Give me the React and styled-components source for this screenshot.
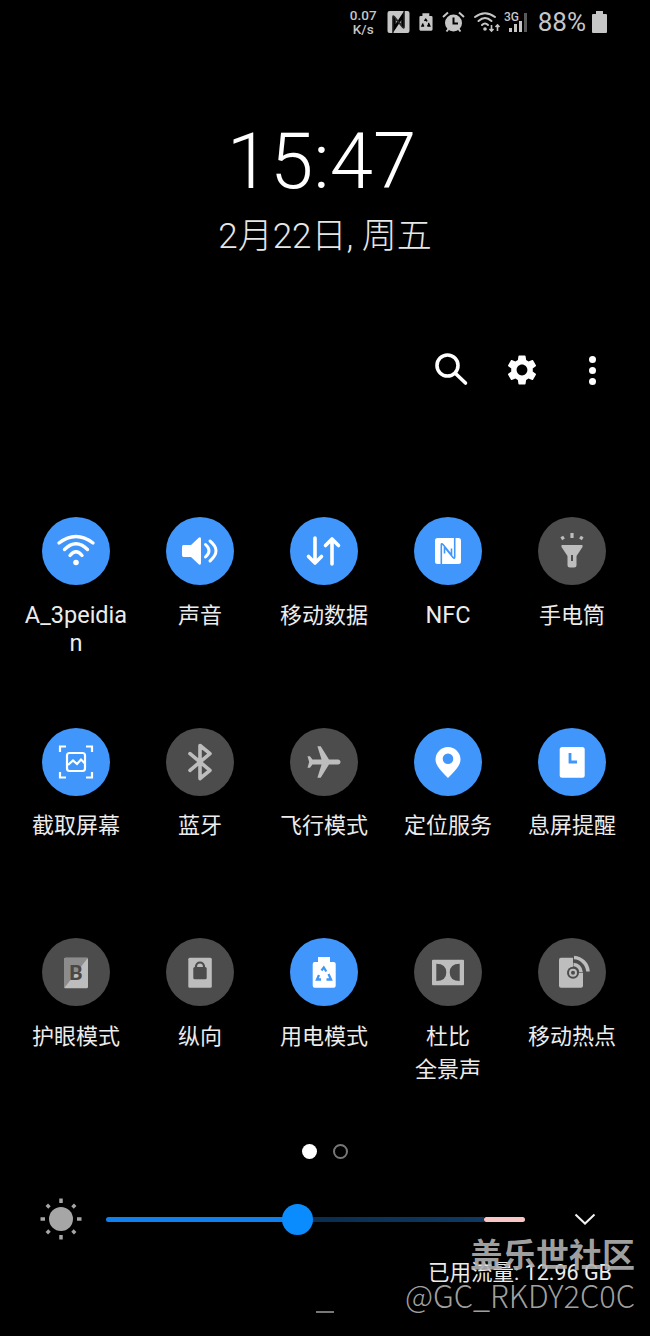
import styled, { createGlobalStyle } from 'styled-components';
import { MdSettings } from 'react-icons/md';

const ON = '#4096fa';
const OFF = '#4c4c4c';
const GLYPH = '#bdbdbd';
const STATUS = '#c6c6c6';

const GlobalStyle = createGlobalStyle`
  html, body {
    margin: 0;
    background: #000;
  }
  body {
    font-family: Roboto, "Noto Sans CJK SC", sans-serif;
    color: #ececec;
  }
`;

const Screen = styled.div`
  position: relative;
  width: 650px;
  height: 1336px;
  overflow: hidden;
  background: #000;
`;

const StatusBar = styled.div`
  display: flex;
  justify-content: flex-end;
  align-items: center;
  gap: 9px;
  height: 44px;
  padding-right: 43px;
  color: ${STATUS};
`;

const Speed = styled.div`
  width: 29px;
  font-size: 13.5px;
  font-weight: 500;
  line-height: 14px;
  text-align: center;
`;

const StatusGroup = styled.div`
  display: flex;
  align-items: center;
  gap: ${(p) => p.$gap}px;
`;

const Percent = styled.span`
  font-size: 26px;
  line-height: 30px;
`;

const Clock = styled.div`
  margin-top: 80px;
  padding-right: 7px;
  font-size: 78px;
  font-weight: 300;
  line-height: 76px;
  text-align: center;
  color: #fff;
`;

const DateLine = styled.div`
  margin-top: 16px;
  font-size: 35px;
  font-weight: 300;
  line-height: 42px;
  text-align: center;
  color: #e6e6e6;
`;

const Actions = styled.div`
  display: flex;
  align-items: center;
  height: 36px;
  margin-top: 94px;
  padding-left: 434px;
  color: #fff;
`;

const GearWrap = styled.div`
  display: flex;
  margin-left: 34px;
  margin-right: 49px;
`;

const Kebab = styled.div`
  display: flex;
  flex-direction: column;
  gap: 4px;
  & > i {
    display: block;
    width: 7px;
    height: 7px;
    border-radius: 50%;
    background: #fff;
  }
`;

const TileGrid = styled.div`
  display: grid;
  grid-template-columns: repeat(5, 124px);
  grid-template-rows: repeat(3, 145px);
  row-gap: 65.5px;
  margin-top: 129px;
  padding-left: 14px;
`;

const Tile = styled.div`
  display: flex;
  flex-direction: column;
  align-items: center;
`;

const Round = styled.div`
  width: 68px;
  height: 68px;
  border-radius: 50%;
  background: ${(p) => (p.$on ? ON : OFF)};
  & > svg {
    display: block;
  }
`;

const Label = styled.div`
  width: 112px;
  margin-top: ${(p) => (p.$latin ? 16 : 13.5)}px;
  font-size: ${(p) => (p.$latin ? 23.5 : 22)}px;
  line-height: ${(p) => (p.$latin ? 28 : 33)}px;
  text-align: center;
  white-space: pre-line;
`;

const Pager = styled.div`
  display: flex;
  justify-content: center;
  align-items: center;
  gap: 16px;
  margin-top: 61px;
`;

const PagerDot = styled.span`
  box-sizing: border-box;
  width: 15px;
  height: 15px;
  border-radius: 50%;
  background: ${(p) => (p.$active ? '#fff' : 'transparent')};
  border: ${(p) => (p.$active ? 'none' : '2.5px solid #777')};
`;

const BrightnessRow = styled.div`
  display: flex;
  align-items: center;
  height: 40px;
  margin-top: 40px;
  padding-left: 39px;
`;

const Slider = styled.div`
  position: relative;
  display: flex;
  width: 419px;
  height: 5px;
  margin: 0 48px 0 23px;
`;

const Segment = styled.div`
  width: ${(p) => p.$width}px;
  background: ${(p) => p.$color};
  border-radius: ${(p) => p.$radius};
`;

const Thumb = styled.div`
  position: absolute;
  left: 175.5px;
  top: -13px;
  width: 31px;
  height: 31px;
  border-radius: 50%;
  background: #0a8cff;
`;

const Usage = styled.div`
  margin-top: 19px;
  padding-right: 38px;
  font-size: 21.5px;
  line-height: 30px;
  text-align: right;
`;

const HomeBar = styled.div`
  width: 18px;
  height: 2px;
  margin: 23px auto 0;
  background: #777;
`;

const Watermark = styled.div`
  position: absolute;
  right: 15px;
  top: 1232px;
  text-align: right;
  color: rgba(176, 176, 176, 0.92);
  font-family: "Noto Sans CJK SC", sans-serif;
`;

const MarkTitle = styled.div`
  font-size: 33px;
  font-weight: 700;
  line-height: 42px;
`;

const MarkHandle = styled.div`
  font-size: 30.8px;
  font-weight: 300;
  line-height: 42px;
`;

const Glyph = ({ children }) => (
  <svg width="68" height="68" viewBox="0 0 68 68" fill="none">
    {children}
  </svg>
);

const WifiIcon = () => (
  <Glyph>
    <g stroke="#fff" strokeWidth="3.4" strokeLinecap="round">
      <path d="M17 26Q34 13 51 26" />
      <path d="M22.5 32.5Q34 21 45.5 32.5" />
      <path d="M28 38.5Q34 31 40 38.5" />
    </g>
    <circle cx="34" cy="45.5" r="2.8" fill="#fff" />
  </Glyph>
);

const SoundIcon = () => (
  <Glyph>
    <path d="M17.5 28H25L33 20.5Q35 19.5 35 22V46Q35 48.5 33 47.5L25 40H17.5Q16 40 16 38V30Q16 28 17.5 28Z" fill="#fff" />
    <path d="M39.5 27.5Q46.5 33.7 39.5 40M44 24Q56 33.7 44 44" stroke="#fff" strokeWidth="3" strokeLinecap="round" />
  </Glyph>
);

const DataIcon = () => (
  <Glyph>
    <path d="M25 21V46M18.5 39.5L25 46L31.5 39.5M42 47V22M35.5 28.5L42 22L48.5 28.5" stroke="#fff" strokeWidth="3.6" strokeLinecap="round" strokeLinejoin="round" />
  </Glyph>
);

const NfcMark = ({ fill, cut, x = 21, y = 21 }) => (
  <g transform={`translate(${x} ${y})`}>
    <rect width="26" height="26" rx="2.5" fill={fill} />
    <path d="M6.3 26V7Q6.3 5 8 6.5L16.5 17V10.5M19.7 0V19Q19.7 21 18 19.5L9.5 9V15.5" stroke={cut} strokeWidth="1.6" />
  </g>
);

const NfcIcon = () => (
  <Glyph>
    <NfcMark fill="#fff" cut={ON} />
  </Glyph>
);

const TorchIcon = () => (
  <Glyph>
    <path d="M23.5 28H44.5V30L38.5 39V48Q38.5 50.5 36 50.5H32Q29.5 50.5 29.5 48V39L23.5 30Z" fill={GLYPH} />
    <rect x="33" y="38" width="2" height="6" fill={OFF} />
    <path d="M34 16V21M23.8 19.5L25.5 22.3M44.2 19.5L42.5 22.3" stroke={GLYPH} strokeWidth="3.2" />
  </Glyph>
);

const CaptureIcon = () => (
  <Glyph>
    <g stroke="#fff" strokeWidth="2.2">
      <path d="M18 24V18.5H24M44 18.5H50V24M18 44V49.5H24M44 49.5H50V44" />
      <rect x="25" y="25" width="18" height="18" rx="2.5" />
      <path d="M26 37L31 32.5L35 36L39 31.5L43 35.5" />
    </g>
  </Glyph>
);

const BluetoothIcon = () => (
  <Glyph>
    <path d="M24 25.7L44 42.3L34 50.5V17.5L44 25.7L24 42.3" stroke={GLYPH} strokeWidth="3.6" strokeLinecap="round" strokeLinejoin="round" />
  </Glyph>
);

const PlaneIcon = () => (
  <Glyph>
    <path
      transform="translate(34 34) rotate(90) scale(1.65) translate(-11.5 -12)"
      d="M21 16v-2l-8-5V3.5c0-.83-.67-1.5-1.5-1.5S10 2.67 10 3.5V9l-8 5v2l8-2.5V19l-2 1.5V22l3.5-1 3.5 1v-1.5L13 19v-5.5l8 2.5z"
      fill={GLYPH}
    />
  </Glyph>
);

const PinIcon = () => (
  <Glyph>
    <path d="M34 19A12.5 12.5 0 0 1 46.5 31.5C46.5 38 40 43.5 34 50C28 43.5 21.5 38 21.5 31.5A12.5 12.5 0 0 1 34 19Z" fill="#fff" />
    <circle cx="34" cy="30.7" r="5.3" fill={ON} />
  </Glyph>
);

const AodIcon = () => (
  <Glyph>
    <rect x="21.7" y="19" width="25" height="30.7" rx="2.5" fill="#fff" />
    <path d="M32 25V34H39" stroke={ON} strokeWidth="2.8" />
  </Glyph>
);

const EyeIcon = () => (
  <Glyph>
    <rect x="22" y="19.7" width="24" height="30.6" rx="1.5" fill={GLYPH} />
    <path d="M46 19.7H23.5Q22 19.7 22 21.2V50.3Z" fill="#8c8c8c" />
    <text x="34" y="42" textAnchor="middle" fontFamily="Roboto, sans-serif" fontSize="21" fontWeight="700" fill="#484848">B</text>
  </Glyph>
);

const LockIcon = () => (
  <Glyph>
    <rect x="22.3" y="19.7" width="23.5" height="30" rx="1.5" fill={GLYPH} />
    <rect x="27.3" y="29" width="13.4" height="12.3" rx="1.5" fill={OFF} />
    <path d="M30 30V28.5A4 4 0 0 1 38 28.5V30" stroke={OFF} strokeWidth="2.2" />
  </Glyph>
);

const BatteryShape = ({ fill, cut }) => (
  <>
    <path d="M28 19H40V24H43.7Q45.7 24 45.7 26V47.7Q45.7 49.7 43.7 49.7H24.7Q22.7 49.7 22.7 47.7V26Q22.7 24 24.7 24H28Z" fill={fill} />
    <path d="M31.5 32.5L33.8 29.5L36.3 33.5M38.5 36L41 41.5H36.5M31 41.5H27L29 37" stroke={cut} strokeWidth="2.3" />
  </>
);

const PowerIcon = () => (
  <Glyph>
    <BatteryShape fill="#fff" cut={ON} />
  </Glyph>
);

const DolbyIcon = () => (
  <Glyph>
    <rect x="18" y="21.7" width="32" height="25.6" rx="1" fill={GLYPH} />
    <path d="M22.3 25.7Q32.3 25.7 32.3 34.5Q32.3 43 22.3 43ZM45.7 25.7Q35.7 25.7 35.7 34.5Q35.7 43 45.7 43Z" fill={OFF} />
  </Glyph>
);

const HotspotIcon = () => (
  <Glyph>
    <rect x="21" y="19.7" width="24" height="30" rx="2" fill={GLYPH} />
    <path d="M35 34.7V16H54V34.7Z" fill={OFF} />
    <circle cx="35" cy="34.7" r="6" fill={OFF} />
    <circle cx="35" cy="34.7" r="3" stroke={GLYPH} strokeWidth="2" />
    <path d="M35.5 26.5A8 8 0 0 1 43 34M36 19.5A15 15 0 0 1 50 33.5" stroke={GLYPH} strokeWidth="3.6" />
  </Glyph>
);

const tiles = [
  { label: 'A_3peidia\nn', on: true, latin: true, Icon: WifiIcon },
  { label: '声音', on: true, Icon: SoundIcon },
  { label: '移动数据', on: true, Icon: DataIcon },
  { label: 'NFC', on: true, latin: true, Icon: NfcIcon },
  { label: '手电筒', on: false, Icon: TorchIcon },
  { label: '截取屏幕', on: true, Icon: CaptureIcon },
  { label: '蓝牙', on: false, Icon: BluetoothIcon },
  { label: '飞行模式', on: false, Icon: PlaneIcon },
  { label: '定位服务', on: true, Icon: PinIcon },
  { label: '息屏提醒', on: true, Icon: AodIcon },
  { label: '护眼模式', on: false, Icon: EyeIcon },
  { label: '纵向', on: false, Icon: LockIcon },
  { label: '用电模式', on: true, Icon: PowerIcon },
  { label: '杜比\n全景声', on: false, Icon: DolbyIcon },
  { label: '移动热点', on: false, Icon: HotspotIcon },
];

const StatusIcons = () => (
  <>
    <svg width="23" height="22" viewBox="0 0 26 26">
      <NfcMark fill={STATUS} cut="#2a2a2a" x={0} y={0} />
    </svg>
    <svg width="14" height="22" viewBox="22 18.5 24.5 32">
      <BatteryShape fill={STATUS} cut="#000" />
    </svg>
    <svg width="23" height="22" viewBox="0 0 23 22" fill="none">
      <circle cx="11.5" cy="12" r="8.5" fill={STATUS} />
      <path d="M11.5 6.5V12.5H16" stroke="#000" strokeWidth="2" />
      <path d="M1 6L6 1.5M22 6L17 1.5M4.5 20.5L6.5 18M18.5 20.5L16.5 18" stroke={STATUS} strokeWidth="2" />
    </svg>
  </>
);

const NetworkIcons = () => (
  <StatusGroup $gap={3}>
    <svg width="27" height="22" viewBox="0 0 27 22" fill="none">
      <g stroke={STATUS} strokeWidth="2" strokeLinecap="round">
        <path d="M1 6Q11 -1.5 21 6" />
        <path d="M4.5 10Q11 4 17.5 10" />
        <path d="M8 14Q11 11 14 14" />
      </g>
      <circle cx="11" cy="18" r="1.8" fill={STATUS} />
      <path d="M17.5 14V20M15.5 18L17.5 20L19.5 18M23.5 20V14M21.5 16L23.5 14L25.5 16" stroke={STATUS} strokeWidth="1.6" />
    </svg>
    <svg width="25" height="22" viewBox="0 0 25 22" fill={STATUS}>
      <text x="0" y="9.5" fontFamily="Roboto, sans-serif" fontSize="12" fontWeight="500">3G</text>
      <rect x="5" y="17" width="3" height="4" />
      <rect x="10" y="13" width="3" height="8" />
      <rect x="15" y="10" width="3" height="11" />
      <rect x="20" y="2" width="3" height="19" opacity="0.45" />
    </svg>
  </StatusGroup>
);

const Sun = () => (
  <svg width="44" height="44" viewBox="0 0 44 44">
    <circle cx="22" cy="22" r="12" fill="#a6a6a6" />
    <path d="M22 1.5V6M22 38V42.5M1.5 22H6M38 22H42.5M7.8 7.8L10.5 10.5M33.5 33.5L36.2 36.2M36.2 7.8L33.5 10.5M10.5 33.5L7.8 36.2" stroke="#a6a6a6" strokeWidth="3.5" />
  </svg>
);

const Chevron = () => (
  <svg width="24" height="14" viewBox="0 0 24 14" fill="none">
    <path d="M2.5 2.5L12 11.5L21.5 2.5" stroke="#f2f2f2" strokeWidth="2" />
  </svg>
);

const App = () => (
  <Screen>
    <GlobalStyle />
    <StatusBar>
      <Speed>
        0.07
        <br />
        K/s
      </Speed>
      <StatusIcons />
      <NetworkIcons />
      <StatusGroup $gap={6}>
        <Percent>88%</Percent>
        <svg width="15" height="22" viewBox="0 0 15 22">
          <path d="M4 0H11V3H14Q15 3 15 4V21Q15 22 14 22H1Q0 22 0 21V4Q0 3 1 3H4Z" fill={STATUS} />
        </svg>
      </StatusGroup>
    </StatusBar>

    <Clock>15:47</Clock>
    <DateLine>2月22日, 周五</DateLine>

    <Actions>
      <svg width="36" height="36" viewBox="0 0 36 36" fill="none">
        <circle cx="13.5" cy="13.5" r="10.5" stroke="#fff" strokeWidth="3.6" />
        <path d="M21.5 21.5L31.5 31" stroke="#fff" strokeWidth="3.6" strokeLinecap="round" />
      </svg>
      <GearWrap>
        <MdSettings size={36} />
      </GearWrap>
      <Kebab>
        <i />
        <i />
        <i />
      </Kebab>
    </Actions>

    <TileGrid>
      {tiles.map(({ label, on, latin, Icon }) => (
        <Tile key={label}>
          <Round $on={on}>
            <Icon />
          </Round>
          <Label $latin={latin}>{label}</Label>
        </Tile>
      ))}
    </TileGrid>

    <Pager>
      <PagerDot $active />
      <PagerDot />
    </Pager>

    <BrightnessRow>
      <Sun />
      <Slider>
        <Segment $width={191} $color="#0f80ee" $radius="3px 0 0 3px" />
        <Segment $width={187} $color="linear-gradient(90deg, #0a2c4e, #0e3a64)" />
        <Segment $width={41} $color="#f8c6c6" $radius="3px" />
        <Thumb />
      </Slider>
      <Chevron />
    </BrightnessRow>

    <Usage>已用流量: 12.96 GB</Usage>
    <HomeBar />

    <Watermark>
      <MarkTitle>盖乐世社区</MarkTitle>
      <MarkHandle>@GC_RKDY2C0C</MarkHandle>
    </Watermark>
  </Screen>
);

export default App;
